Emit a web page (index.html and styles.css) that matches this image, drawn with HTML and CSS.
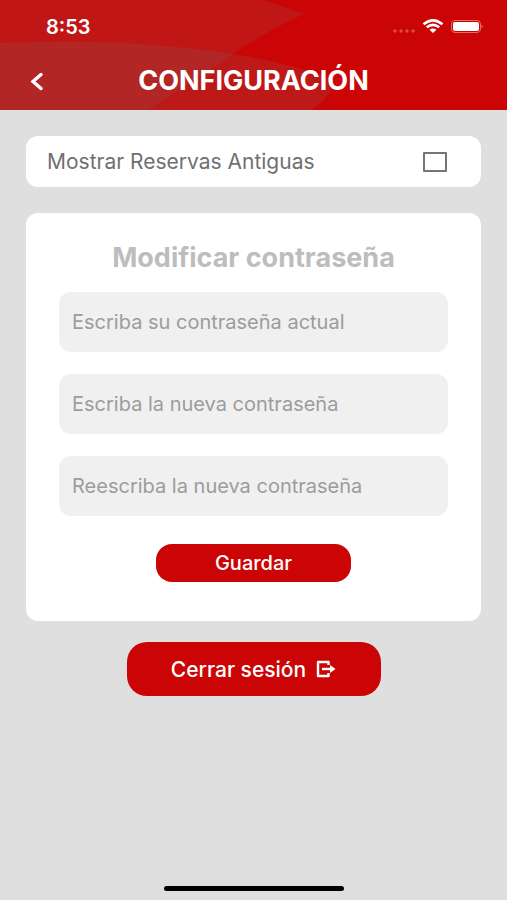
FILE: index.html
```
<!DOCTYPE html>
<html lang="es">
<head>
    <meta charset="UTF-8">
    <meta name="viewport" content="width=device-width, initial-scale=1.0">
    <title>Configuración</title>
    <link rel="stylesheet" href="styles.css">
</head>
<body>
    <header class="header">
        <svg class="header-bg" viewBox="0 0 507 110" preserveAspectRatio="none" aria-hidden="true">
            <path fill="#c11616" d="M0 0H264L304 14Q267 31 236 52L148 110H0Z"/>
            <path fill="#bd1919" d="M0 43Q125 37 233 54Q295 64 333 80Q335 94 311 110H0Z"/>
            <path fill="#b22626" d="M0 43Q125 37 233 54L148 110H0Z"/>
        </svg>
        <div class="status">
            <span class="time">8:53</span>
            <svg class="status-icons" width="92" height="18" viewBox="0 0 92 18" aria-hidden="true">
                <g fill="#dc4a4a">
                    <circle cx="4" cy="13" r="1.700"/>
                    <circle cx="10" cy="13" r="1.700"/>
                    <circle cx="16" cy="13" r="1.700"/>
                    <circle cx="22" cy="13" r="1.700"/>
                </g>
                <g fill="none" stroke="#fff" stroke-width="2.600">
                    <path d="M32.500 6.200Q42 -1.600 51.500 6.200"/>
                    <path d="M35.800 9.300Q42 4.300 48.200 9.300"/>
                </g>
                <path fill="#fff" d="M38.500 11.800Q42 9.200 45.500 11.800L42 15Z"/>
                <rect x="60.500" y="2.500" width="29" height="12" rx="3.500" fill="none" stroke="#e36a6a"/>
                <rect x="62" y="4" width="26" height="9" rx="2" fill="#fff"/>
                <path fill="#e36a6a" d="M90.500 6.500Q93 8.500 90.500 10.500Z"/>
            </svg>
        </div>
        <div class="title-bar">
            <button type="button" class="back" aria-label="Volver">
                <svg width="14" height="20" viewBox="0 0 14 20" aria-hidden="true">
                    <path d="M12 3.500L4 10.500L12 17.500" fill="none" stroke="#fff" stroke-width="3.400" stroke-linecap="round"/>
                </svg>
            </button>
            <h1>CONFIGURACIÓN</h1>
        </div>
    </header>

    <main>
        <div class="option">
            <label for="antiguas">Mostrar Reservas Antiguas</label>
            <input type="checkbox" id="antiguas">
        </div>

        <form class="card">
            <h2>Modificar contraseña</h2>
            <input type="password" placeholder="Escriba su contraseña actual" aria-label="Contraseña actual">
            <input type="password" placeholder="Escriba la nueva contraseña" aria-label="Nueva contraseña">
            <input type="password" placeholder="Reescriba la nueva contraseña" aria-label="Repetir nueva contraseña">
            <button type="button" class="save">Guardar</button>
        </form>

        <button type="button" class="logout">
            Cerrar sesión
            <svg width="20" height="18" viewBox="0 0 20 18" aria-hidden="true">
                <path d="M12.500 5V2H2V16H12.500V13" fill="none" stroke="#fff" stroke-width="2.400" stroke-linejoin="round"/>
                <path d="M6 9H15" stroke="#fff" stroke-width="2.400"/>
                <path d="M14 5L19.500 9L14 13Z" fill="#fff"/>
            </svg>
        </button>
    </main>

    <div class="home-bar"></div>
</body>
</html>
```

FILE: styles.css
```
* {
    box-sizing: border-box;
}
body {
    margin: 0;
    min-height: 100vh;
    display: flex;
    flex-direction: column;
    font-family: Inter, "Open Sans", sans-serif;
    background-color: #dfdfdf;
}
h1, h2 {
    margin: 0;
    font-weight: 700;
}
button {
    border: none;
    color: white;
    font-family: inherit;
    font-weight: 500;
    cursor: pointer;
}
.header {
    position: relative;
    background-color: #cb0505;
    color: white;
}
/* decorative shapes behind the header */
.header-bg {
    position: absolute;
    top: 0;
    left: 0;
    width: 100%;
    height: 100%;
}
.status, .title-bar {
    position: relative;
    display: flex;
    align-items: center;
}
.status {
    justify-content: space-between;
    height: 52px;
    padding: 2px 24px 0 46px;
}
.time {
    font-size: 20px;
    font-weight: 600;
}
.title-bar {
    height: 58px;
    padding: 0 24px;
}
.back {
    display: flex;
    justify-content: center;
    width: 24px;
    padding: 0;
    background: none;
}
h1 {
    flex: 1;
    margin-right: 24px;
    text-align: center;
    font-size: 27px;
    line-height: 30px;
}
main {
    flex: 1;
    display: flex;
    flex-direction: column;
    align-items: center;
    padding: 26px;
}
.option {
    display: flex;
    justify-content: space-between;
    align-items: center;
    width: 100%;
    height: 51px;
    padding: 0 34px 0 21px;
    margin-bottom: 26px;
    border-radius: 12px;
    background: white;
    color: #707070;
    font-size: 21px;
}
.option input {
    appearance: none;
    width: 24px;
    height: 20px;
    margin: 0;
    border: 2px solid #757575;
    border-radius: 1px;
    background: white;
}
.option input:checked {
    background: #cb0505;
}
.card {
    display: flex;
    flex-direction: column;
    align-items: center;
    width: 100%;
    padding: 30px 33px 39px;
    border-radius: 12px;
    background: white;
}
h2 {
    margin-bottom: 19px;
    color: #bdbdbd;
    font-size: 27px;
    line-height: 30px;
}
.card input {
    width: 100%;
    height: 60px;
    margin-bottom: 22px;
    padding: 0 13px;
    border: none;
    border-radius: 12px;
    background: #f0f0f0;
    font-family: inherit;
    font-size: 20px;
}
.card input::placeholder {
    color: #9c9c9c;
    opacity: 1;
}
.save {
    width: 50%;
    height: 38px;
    margin-top: 6px;
    border-radius: 16px;
    background: #cb0505;
    font-size: 20px;
}
.logout {
    display: flex;
    justify-content: center;
    align-items: center;
    gap: 10px;
    width: 254px;
    height: 54px;
    margin-top: 21px;
    border-radius: 20px;
    background: #cb0505;
    font-size: 21px;
}
.home-bar {
    align-self: center;
    width: 180px;
    height: 5px;
    margin-bottom: 9px;
    border-radius: 3px;
    background: black;
}
```
